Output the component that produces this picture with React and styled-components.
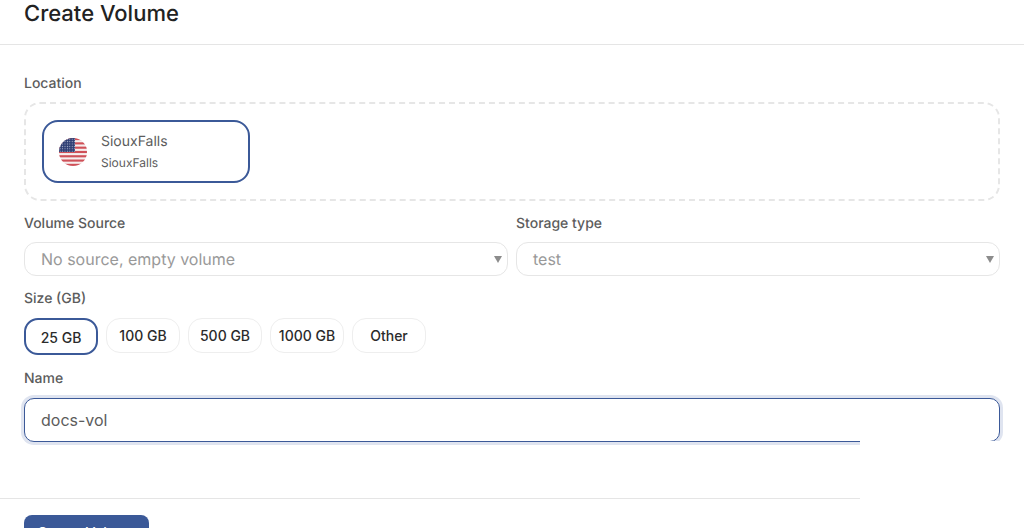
import styled, { createGlobalStyle } from "styled-components"

const GlobalStyle = createGlobalStyle`
    html, body {
        margin: 0;
        background: #fff;
        font-family: "Inter", "Liberation Sans", sans-serif;
        text-rendering: geometricPrecision;
    }
`

const Page = styled.div`
    position: relative;
    width: 1024px;
    height: 528px;
    overflow: hidden;
    background: #fff;
`

const Header = styled.header`
    height: 44px;
    border-bottom: 1px solid #e5e5e5;
    padding: 0 24px;
`

const Title = styled.h1`
    margin: 0;
    font-size: 22px;
    line-height: 28px;
    font-weight: 500;
    color: #222;
`

const Form = styled.div`
    height: 453px;
    box-sizing: border-box;
    padding: 28px 24px 0;
    display: flex;
    flex-direction: column;
`

const Label = styled.label`
    display: block;
    padding-top: 1px;
    font-size: 14px;
    line-height: 20px;
    font-weight: 500;
    color: #5c5c5c;
    margin-bottom: ${(p) => p.$gap || 8}px;
`

const LocationBox = styled.div`
    height: 99px;
    box-sizing: border-box;
    border: 2px dashed #e6e6e6;
    border-radius: 16px;
    padding: 16px;
    margin-bottom: 12px;
`

const LocationCard = styled.div`
    width: 208px;
    height: 63px;
    box-sizing: border-box;
    border: 2px solid #3b5998;
    border-radius: 16px;
    display: flex;
    align-items: center;
    gap: 14px;
    padding: 0 15px;
`

const CardText = styled.div`
    display: flex;
    flex-direction: column;
    gap: 3px;
`

const CardName = styled.span`
    font-size: 14px;
    line-height: 20px;
    color: #5c5c5c;
`

const CardSub = styled.span`
    font-size: 12px;
    line-height: 16px;
    color: #5c5c5c;
`

const Columns = styled.div`
    display: grid;
    grid-template-columns: 484px 484px;
    gap: 8px;
    margin-bottom: 12px;
`

const SelectWrap = styled.div`
    position: relative;
    height: 34px;
    box-sizing: border-box;
    border: 1px solid #e6e6e6;
    border-radius: 12px;
    padding-left: 16px;
    display: flex;
    align-items: center;
    font-size: 16px;
    color: #999;

    &::after {
        content: "";
        position: absolute;
        right: 5px;
        top: 13px;
        border-left: 4px solid transparent;
        border-right: 4px solid transparent;
        border-top: 7px solid #8c8c8c;
    }
`

const Pills = styled.div`
    display: flex;
    gap: 8px;
    margin-bottom: 13px;
    height: 37px;
`

const Pill = styled.button`
    width: 74px;
    height: ${(p) => (p.$active ? 37 : 35)}px;
    box-sizing: border-box;
    padding: ${(p) => (p.$active ? "1px 0 0" : "0")};
    background: #fff;
    border: ${(p) => (p.$active ? "2px solid #3b5998" : "1px solid #eeeeee")};
    border-radius: 14px;
    font-family: inherit;
    font-size: 14px;
    font-weight: 500;
    color: #2b2b2b;
`

const NameInput = styled.input`
    width: 976px;
    height: 44px;
    box-sizing: border-box;
    padding: 0 16px;
    border: 1px solid #3b5998;
    border-radius: 10px;
    box-shadow: 0 0 0 3px #dfe4f0;
    outline: none;
    font-family: inherit;
    font-size: 16px;
    color: #5c5c5c;
`

const Footer = styled.footer`
    border-top: 1px solid #e5e5e5;
    padding: 16px 24px 0;
`

const SubmitButton = styled.button`
    display: block;
    width: 125px;
    height: 34px;
    padding: 0;
    border: 0;
    border-radius: 8px;
    background: #3b5998;
    color: #fff;
    font-family: inherit;
    font-size: 14px;
    font-weight: 500;
`

// tapa branca por cima do canto inferior direito
const Cover = styled.div`
    position: absolute;
    left: 860px;
    top: 441px;
    right: 0;
    bottom: 0;
    background: #fff;
`

function UsFlag() {
    const stripes = [0, 4.3, 8.6, 12.9, 17.2, 21.5, 25.8]
    return (
        <svg width="28" height="28" viewBox="0 0 28 28">
            <defs>
                <clipPath id="flagClip">
                    <circle cx="14" cy="14" r="14" />
                </clipPath>
                <pattern id="flagStars" width="2.4" height="2.4" patternUnits="userSpaceOnUse">
                    <rect width="2.4" height="2.4" fill="#2f3f74" />
                    <circle cx="1.2" cy="1.2" r="0.55" fill="#b9c0d6" />
                </pattern>
            </defs>
            <g clipPath="url(#flagClip)">
                <rect width="28" height="28" fill="#f6eeee" />
                {stripes.map((y) => (
                    <rect key={y} y={y} width="28" height="2.15" fill="#cf5058" />
                ))}
                <rect width="16" height="14" fill="url(#flagStars)" />
            </g>
        </svg>
    )
}

export default function App() {
    return (
        <Page>
            <GlobalStyle />
            <Header>
                <Title>Create Volume</Title>
            </Header>
            <Form>
                <Label>Location</Label>
                <LocationBox>
                    <LocationCard>
                        <UsFlag />
                        <CardText>
                            <CardName>SiouxFalls</CardName>
                            <CardSub>SiouxFalls</CardSub>
                        </CardText>
                    </LocationCard>
                </LocationBox>
                <Columns>
                    <div>
                        <Label>Volume Source</Label>
                        <SelectWrap>No source, empty volume</SelectWrap>
                    </div>
                    <div>
                        <Label>Storage type</Label>
                        <SelectWrap>test</SelectWrap>
                    </div>
                </Columns>
                <Label $gap={9}>Size (GB)</Label>
                <Pills>
                    <Pill $active>25 GB</Pill>
                    <Pill>100 GB</Pill>
                    <Pill>500 GB</Pill>
                    <Pill>1000 GB</Pill>
                    <Pill>Other</Pill>
                </Pills>
                <Label $gap={9}>Name</Label>
                <NameInput defaultValue="docs-vol" />
            </Form>
            <Footer>
                <SubmitButton>Create Volume</SubmitButton>
            </Footer>
            <Cover />
        </Page>
    )
}
